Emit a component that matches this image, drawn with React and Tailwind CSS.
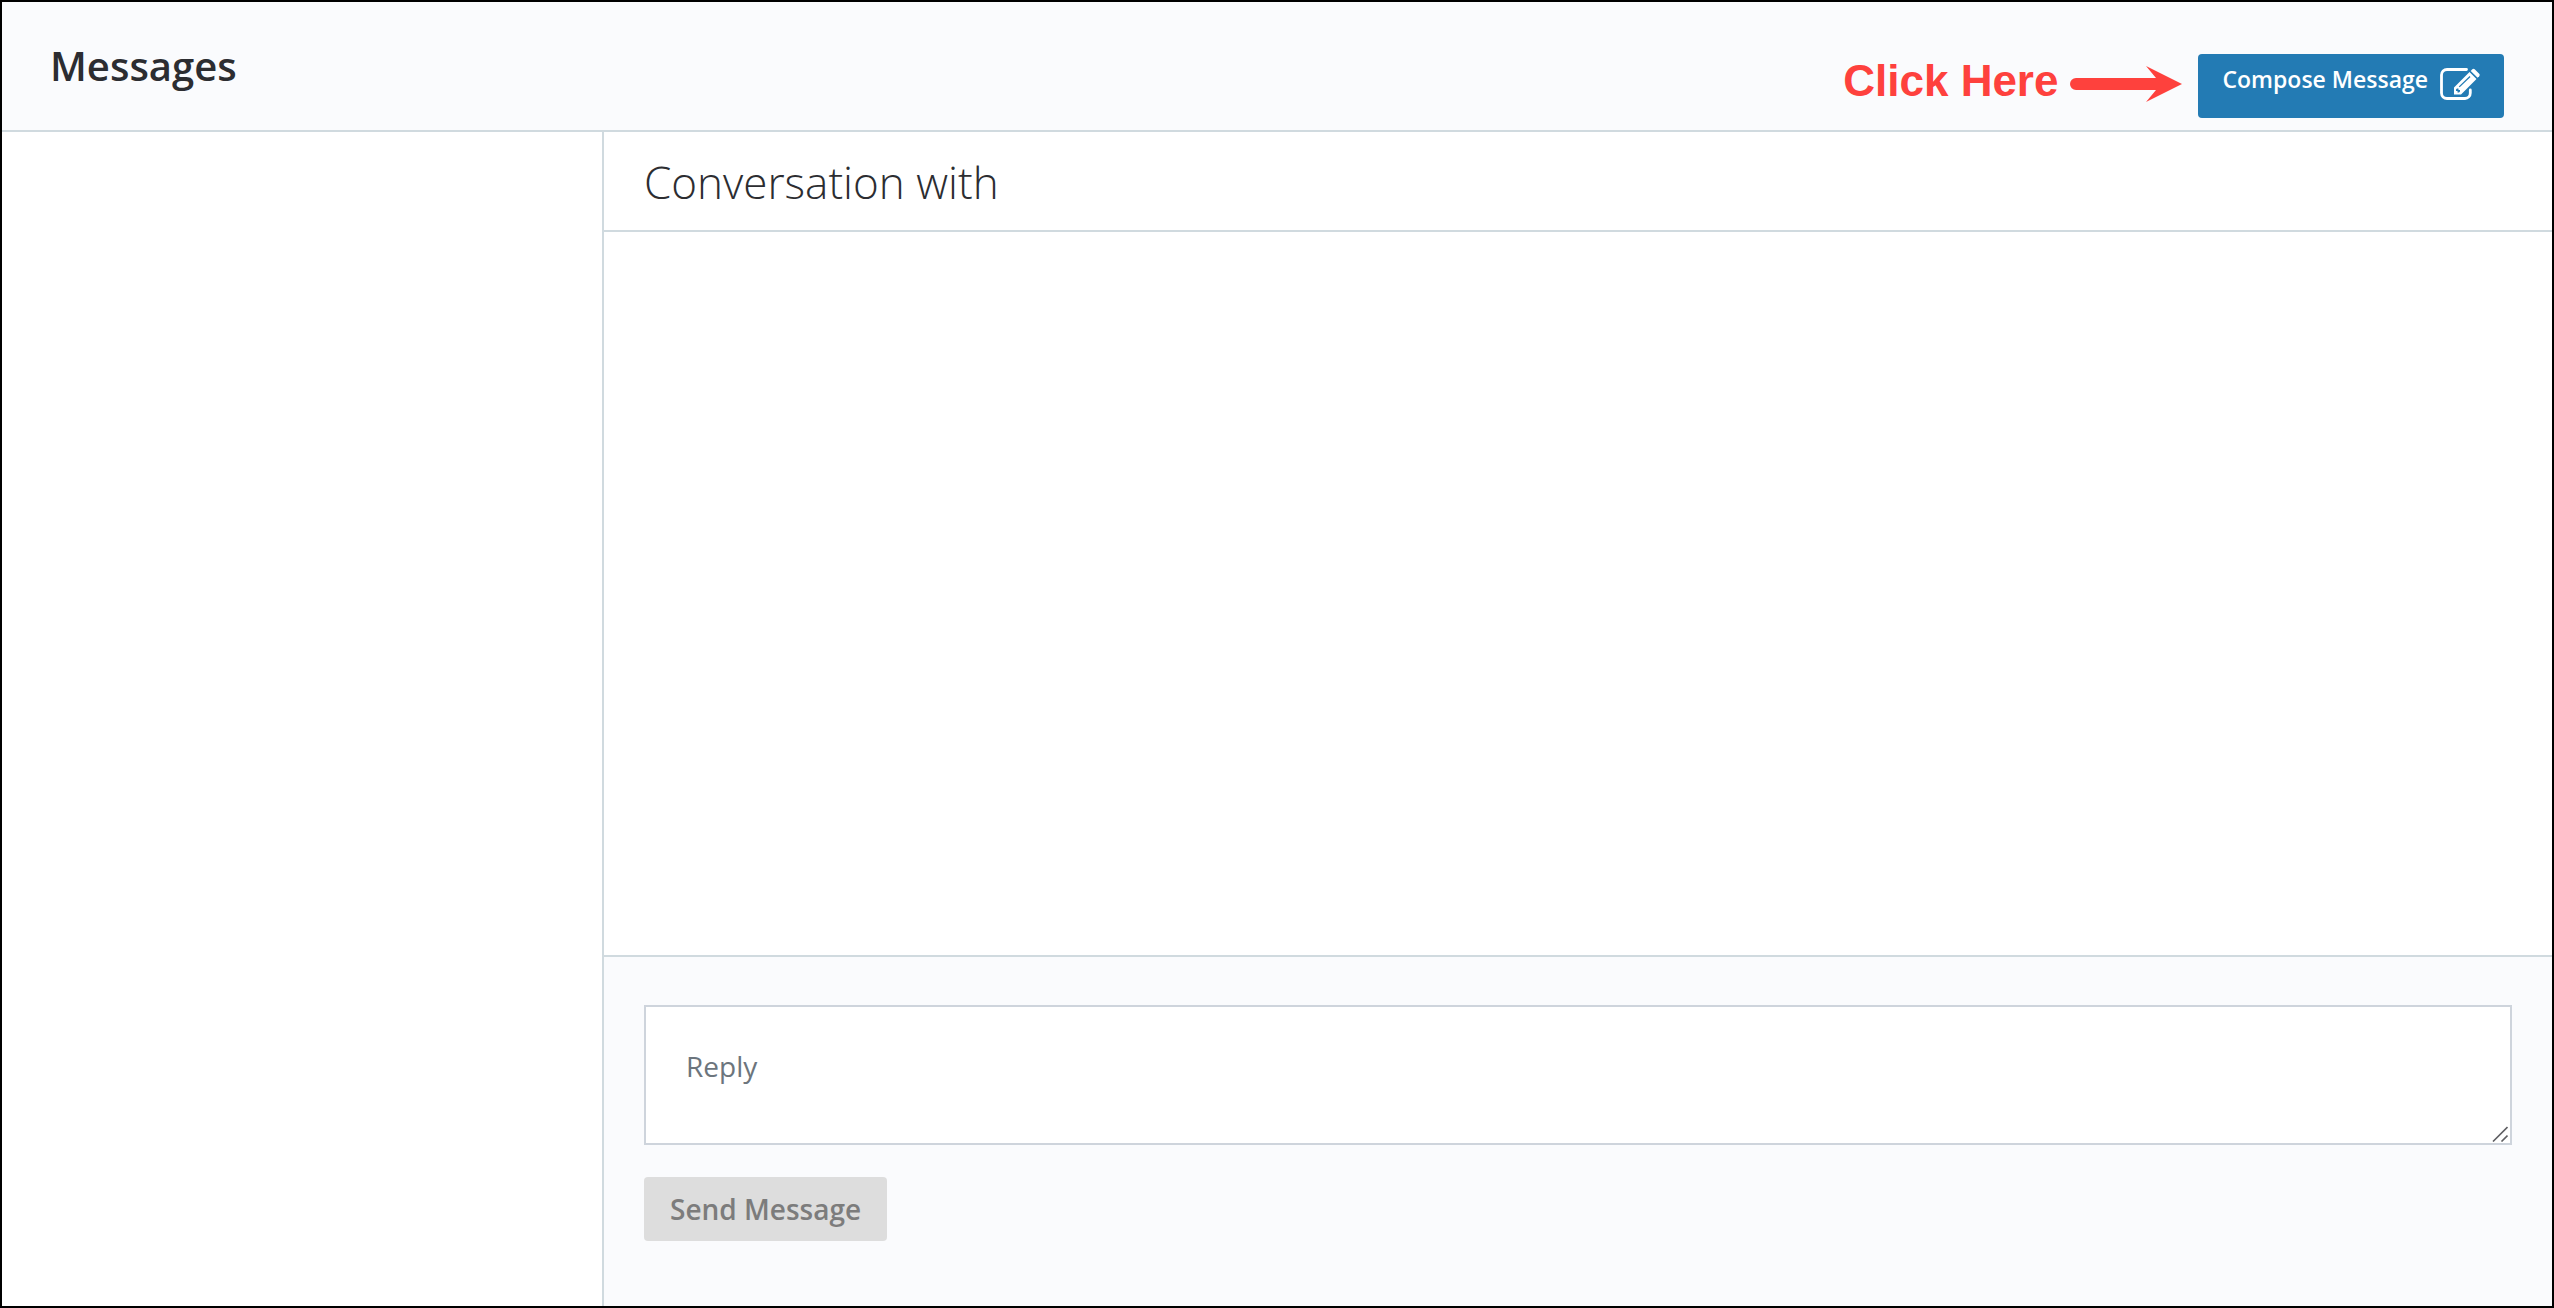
import React from "react";

function ComposeIcon() {
  return (
    <svg viewBox="0 0 40 33" className="w-10 h-[33px]" fill="none" aria-hidden="true">
      <path
        d="M26.500 1.500H7A5.500 5.500 0 0 0 1.500 7v18A5.500 5.500 0 0 0 7 30.500h18A5.500 5.500 0 0 0 30.300 25v-3"
        stroke="white"
        strokeWidth="2.8"
        strokeLinecap="round"
      />
      <path
        fillRule="evenodd"
        fill="white"
        d="M14 19.500 29.500 4l7 7L21 26.500h-7zM17 20.500l-1 1V23H17.500v1.500H19l1-1V22h-1.500v-1.500zM18.800 18.400l.9.900L30.500 8.900l-.9-.9z"
      />
      <path fill="white" d="m30.700 2.900 1.600-1.600q1.200-1 2.400 0L39.200 5.800q1 1.200 0 2.400l-1.600 1.600z" />
    </svg>
  );
}

function Arrow() {
  return (
    <svg viewBox="0 0 112 36" className="w-28 h-9" fill="#fe413d" aria-hidden="true">
      <path d="M6 12H86L76 0 112 18 76 36 86 24H6A6 6 0 0 1 6 12Z" />
    </svg>
  );
}

function ResizeGrip() {
  return (
    <svg
      viewBox="0 0 16 16"
      className="absolute right-1 bottom-[3px] w-4 h-4 pointer-events-none"
      stroke="#5f5f63"
      strokeWidth="1.6"
      aria-hidden="true"
    >
      <path d="M1 15.500 15.500 1M9.500 15.500l6-6" />
    </svg>
  );
}

function Header() {
  return (
    <header className="flex justify-between h-[130px] px-12 bg-[#fafbfd] border-b-2 border-[#d0dadf]">
      <h1 className="pt-9 text-[40px] leading-[56px] font-semibold">Messages</h1>
      <div className="flex items-start pt-[52px]">
        <div className="flex items-center gap-3 h-[60px] mr-4">
          <span className="pb-1.5 font-['Liberation_Sans',Arial,sans-serif] text-[44px] leading-[48px] font-bold text-[#fe413d]">
            Click Here
          </span>
          <Arrow />
        </div>
        <button
          type="button"
          className="flex items-start gap-3 h-16 px-6 pt-3.5 rounded bg-[#237bb4] text-[23px] leading-[22px] font-semibold text-white"
        >
          Compose Message
          <ComposeIcon />
        </button>
      </div>
    </header>
  );
}

function ReplyForm() {
  return (
    <form className="h-[351px] px-10 pt-12 bg-[#fafbfd] border-t-2 border-[#d0dadf]">
      <div className="relative">
        <textarea
          aria-label="Reply"
          placeholder="Reply"
          className="block w-full h-[140px] px-10 py-[38px] resize-none bg-white border-2 border-[#ced4dc] text-[28px] leading-[42px] placeholder:text-[#6c757d]"
        />
        <ResizeGrip />
      </div>
      <button
        type="submit"
        disabled
        className="h-16 mt-8 px-[26px] rounded bg-[#dddddd] text-[28px] leading-[42px] font-semibold text-[#7c7c7c]"
      >
        Send Message
      </button>
    </form>
  );
}

export default function App() {
  return (
    <div className="flex flex-col min-h-screen border-2 border-black bg-white font-['Open_Sans',sans-serif] text-[#2c2d31]">
      <Header />
      <main className="flex flex-1">
        <aside className="w-[602px] shrink-0 border-r-2 border-[#d0dadf]" />
        <section className="flex flex-col flex-1">
          <h2 className="h-[100px] px-10 pt-5 border-b-2 border-[#d0dadf] text-[44px] leading-[60px] font-light">
            Conversation with
          </h2>
          <div className="flex-1" />
          <ReplyForm />
        </section>
      </main>
    </div>
  );
}
